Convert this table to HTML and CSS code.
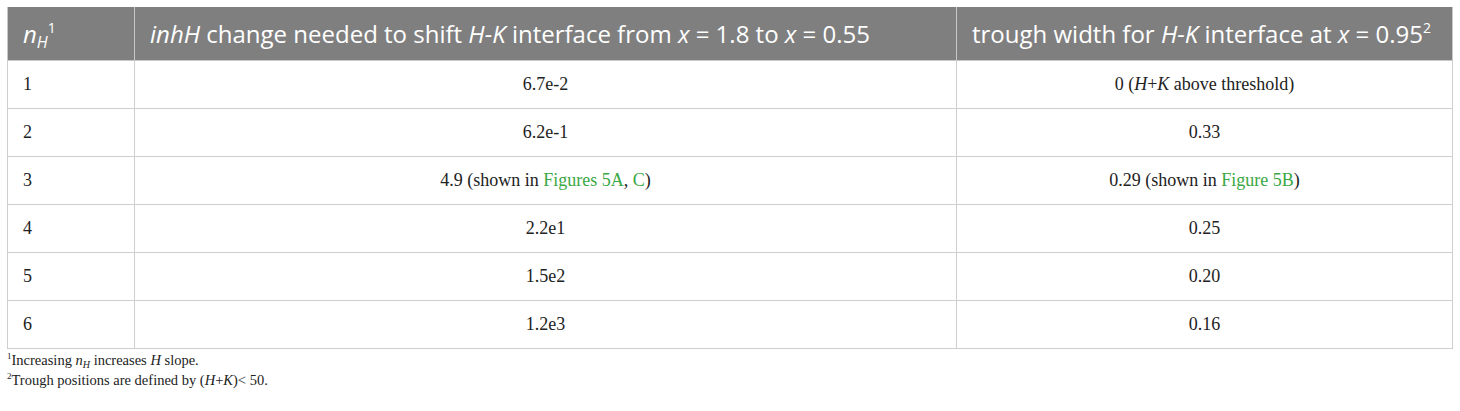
FILE: index.html
```html
<!DOCTYPE html>
<html>
<head>
<meta charset="utf-8">
<link rel="stylesheet" href="styles.css">
</head>
<body>
<div class="wrap">
<table class="tbl">
  <thead>
    <tr>
      <th class="c1"><i>n<sub>H</sub></i><sup>1</sup></th>
      <th class="c2"><i>inhH</i> change needed to shift <i>H-K</i> interface from <i>x</i> = 1.8 to <i>x</i> = 0.55</th>
      <th class="c3">trough width for <i>H-K</i> interface at <i>x</i> = 0.95<sup>2</sup></th>
    </tr>
  </thead>
  <tbody>
    <tr><td class="c1">1</td><td class="ctr">6.7e-2</td><td class="ctr">0 (<i>H</i>+<i>K</i> above threshold)</td></tr>
    <tr><td class="c1">2</td><td class="ctr">6.2e-1</td><td class="ctr">0.33</td></tr>
    <tr><td class="c1">3</td><td class="ctr">4.9 (shown in <a class="lnk">Figures 5A</a>, <a class="lnk">C</a>)</td><td class="ctr">0.29 (shown in <a class="lnk">Figure 5B</a>)</td></tr>
    <tr><td class="c1">4</td><td class="ctr">2.2e1</td><td class="ctr">0.25</td></tr>
    <tr><td class="c1">5</td><td class="ctr">1.5e2</td><td class="ctr">0.20</td></tr>
    <tr><td class="c1">6</td><td class="ctr">1.2e3</td><td class="ctr">0.16</td></tr>
  </tbody>
</table>
<div class="notes">
  <p><sup>1</sup>Increasing <i>n<sub>H</sub></i> increases <i>H</i> slope.</p>
  <p><sup>2</sup>Trough positions are defined by (<i>H</i>+<i>K</i>)&lt; 50.</p>
</div>
</div>
</body>
</html>
```
FILE: styles.css
```css
html, body { margin: 0; padding: 0; background: #fff; }
.wrap { padding: 7px 7px 0 7px; }
.tbl {
  width: 1446px;
  border-collapse: collapse;
  table-layout: fixed;
  font-family: "Liberation Serif", serif;
  font-size: 18px;
  color: #222;
}
.tbl th {
  background: #7f7f7f;
  color: #fff;
  font-family: "Open Sans", sans-serif;
  font-weight: normal;
  font-size: 24px;
  text-align: left;
  height: 53px;
  padding: 0 0 0 15px;
  border: 1px solid #c8c8c8;
  border-top: none;
  box-sizing: border-box;
  white-space: nowrap;
}
.tbl th.c1 { width: 127px; }
.tbl th.c2 { width: 822px; }
.tbl th sup { font-size: 14px; vertical-align: 10px; line-height: 0; }
.tbl th sub { font-size: 16px; vertical-align: -5px; line-height: 0; }
.tbl td {
  height: 48px;
  border: 1px solid #cfcfcf;
  padding: 0 0 0 15px;
  box-sizing: border-box;
}
.tbl td.ctr { text-align: center; padding: 0; }
.lnk { color: #3aa845; text-decoration: none; }
.notes {
  font-family: "Liberation Serif", serif;
  font-size: 14.5px;
  color: #222;
  padding-top: 1px;
}
.notes p { margin: 0; line-height: 20px; }
.notes sup { font-size: 9px; vertical-align: 6px; line-height: 0; }
.notes sub { font-size: 10px; vertical-align: -3px; line-height: 0; }
```
